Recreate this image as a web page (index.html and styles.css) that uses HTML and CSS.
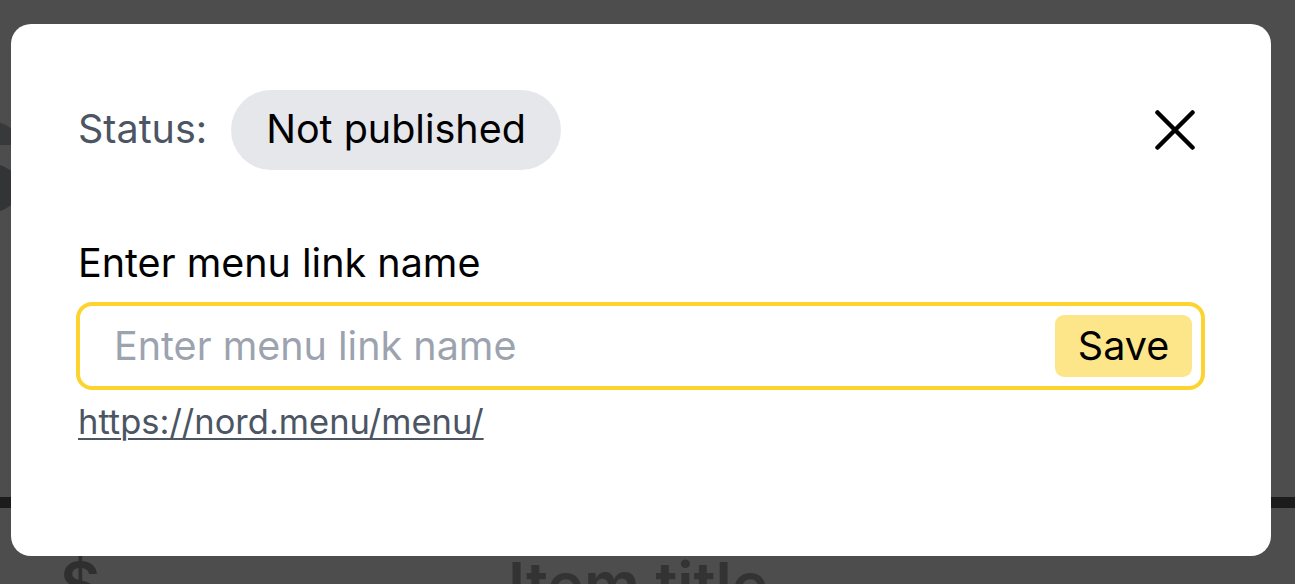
FILE: index.html
```html
<!DOCTYPE html>
<html lang="en">
<head>
<meta charset="utf-8">
<title>Menu link</title>
<link rel="stylesheet" href="styles.css">
</head>
<body>
<div class="page">
  <div class="page-hero">
    <div class="hero-mark hero-mark-top"></div>
    <div class="hero-mark hero-mark-bottom"></div>
  </div>
  <div class="page-rule"></div>
  <div class="page-row">
    <span class="page-price">$</span>
    <span class="page-title">Item title</span>
  </div>
</div>
<div class="overlay">
  <div class="modal">
    <div class="modal-head">
      <div class="status">
        <span class="status-label">Status:</span>
        <span class="pill">Not published</span>
      </div>
      <button class="close" type="button" aria-label="Close">
        <svg width="40" height="40" viewBox="0 0 40 40" fill="none" stroke="#000" stroke-width="4.5" stroke-linecap="round">
          <line x1="2.5" y1="2.5" x2="37.5" y2="37.5"/>
          <line x1="37.5" y1="2.5" x2="2.5" y2="37.5"/>
        </svg>
      </button>
    </div>
    <label class="field-label" for="linkname">Enter menu link name</label>
    <div class="field">
      <input id="linkname" class="field-input" type="text" placeholder="Enter menu link name">
      <button class="save" type="button">Save</button>
    </div>
    <a class="link" href="#">https://nord.menu/menu/</a>
  </div>
</div>
</body>
</html>
```
FILE: styles.css
```css
* { box-sizing: border-box; }
html, body { margin: 0; padding: 0; }
body {
  width: 1295px;
  height: 584px;
  overflow: hidden;
  background: #4d4d4d;
  font-family: Inter, "Noto Sans", sans-serif;
}
.page { width: 100%; }
.page-hero {
  height: 497px;
  padding-top: 121px;
}
.hero-mark {
  width: 80px;
  margin-left: -60px;
}
.hero-mark-top {
  height: 24px;
  background: #38393a;
  border-top-right-radius: 40px 30px;
}
.hero-mark-bottom {
  margin-top: 18px;
  height: 50px;
  background: #333435;
  border-radius: 0 40px 40px 0 / 0 30px 30px 0;
}
.page-rule {
  height: 11px;
  background: #1c1c1d;
}
.page-row {
  display: flex;
  align-items: baseline;
  padding-left: 60px;
  margin-top: 46px;
  font-size: 62px;
  font-weight: 600;
  line-height: 1;
  color: #333333;
}
.page-price { width: 448px; color: #2f2f2f; }
.overlay {
  position: fixed;
  inset: 0;
  padding: 24px 24px 28px 11px;
}
.modal {
  width: 1260px;
  height: 532px;
  background: #ffffff;
  border-radius: 20px;
  padding: 66px 66px 0 65px;
  display: flex;
  flex-direction: column;
  font-size: 39.5px;
  font-weight: 400;
  line-height: 1.2;
}
.modal-head {
  height: 80px;
  margin-left: 2px;
  display: flex;
  align-items: center;
  justify-content: space-between;
}
.status {
  display: flex;
  align-items: center;
  gap: 24px;
}
.status-label { color: #4b5563; }
.pill {
  height: 80px;
  display: flex;
  align-items: center;
  padding: 0 35px;
  border-radius: 40px;
  background: #e5e7eb;
  color: #000;
}
.close {
  border: 0;
  background: none;
  padding: 0;
  margin-right: 10px;
  display: flex;
  cursor: pointer;
}
.field-label {
  margin-top: 70px;
  margin-left: 2px;
  color: #000;
}
.field {
  margin-top: 15px;
  height: 88px;
  border: 4px solid #fdd330;
  border-radius: 16px;
  display: flex;
  align-items: center;
  padding: 0 9px 0 34px;
}
.field-input {
  flex: 1;
  min-width: 0;
  border: 0;
  outline: none;
  background: transparent;
  font: inherit;
  color: #000;
  padding: 0;
}
.field-input::placeholder { color: #9ca3af; }
.save {
  height: 62px;
  width: 137px;
  border: 0;
  border-radius: 9px;
  background: #fde68a;
  font: inherit;
  color: #000;
  padding: 0;
  cursor: pointer;
}
.link {
  margin-top: 11px;
  margin-left: 2px;
  align-self: flex-start;
  font-size: 34.5px;
  color: #4b5563;
  text-decoration: underline;
  text-decoration-thickness: 2px;
  text-underline-offset: 4px;
}
```
